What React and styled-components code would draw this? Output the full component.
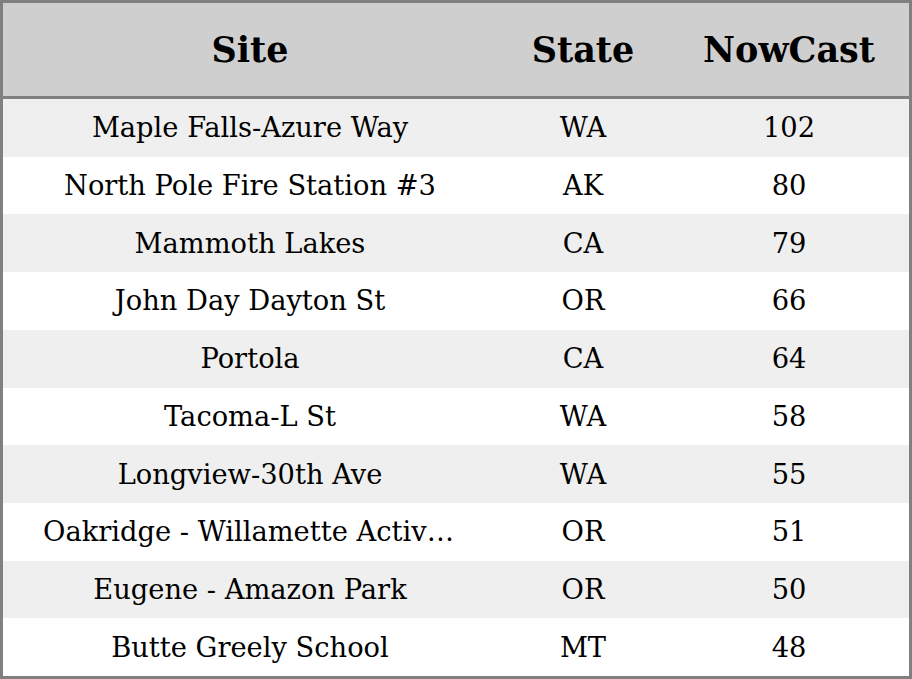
import React from 'react'
import styled, { createGlobalStyle } from 'styled-components'

const GlobalStyle = createGlobalStyle`
  html, body {
    margin: 0;
    padding: 0;
    background: #ffffff;
  }
`

const Table = styled.div`
  width: 912px;
  height: 679px;
  box-sizing: border-box;
  border: 3px solid #808080;
  display: flex;
  flex-direction: column;
  font-family: "DejaVu Serif", serif;
  color: #000;
`

const Row = styled.div`
  display: grid;
  grid-template-columns: 494px 172px 240px;
  align-items: center;
  flex: 1;
  background: ${(p) => (p.$odd ? '#efefef' : '#ffffff')};
`

const HeaderRow = styled(Row)`
  flex: 0 0 93px;
  background: #cfcfcf;
  border-bottom: 3px solid #808080;
`

const HeadCell = styled.div`
  text-align: center;
  font-weight: bold;
  font-size: 35px;
`

const Cell = styled.div`
  text-align: center;
  font-size: 27.3px;
  white-space: nowrap;
  overflow: hidden;
  text-overflow: ellipsis;
  padding: ${(p) => (p.$site ? '0 40px' : '0')};
`

const rows = [
  ['Maple Falls-Azure Way', 'WA', 102],
  ['North Pole Fire Station #3', 'AK', 80],
  ['Mammoth Lakes', 'CA', 79],
  ['John Day Dayton St', 'OR', 66],
  ['Portola', 'CA', 64],
  ['Tacoma-L St', 'WA', 58],
  ['Longview-30th Ave', 'WA', 55],
  ['Oakridge - Willamette Activity Center', 'OR', 51],
  ['Eugene - Amazon Park', 'OR', 50],
  ['Butte Greely School', 'MT', 48],
]

export default function App() {
  return (
    <>
      <GlobalStyle />
      <Table>
        <HeaderRow>
          <HeadCell>Site</HeadCell>
          <HeadCell>State</HeadCell>
          <HeadCell>NowCast</HeadCell>
        </HeaderRow>
        {rows.map(([site, state, value], i) => (
          <Row key={site} $odd={i % 2 === 0}>
            <Cell $site>{site}</Cell>
            <Cell>{state}</Cell>
            <Cell>{value}</Cell>
          </Row>
        ))}
      </Table>
    </>
  )
}
